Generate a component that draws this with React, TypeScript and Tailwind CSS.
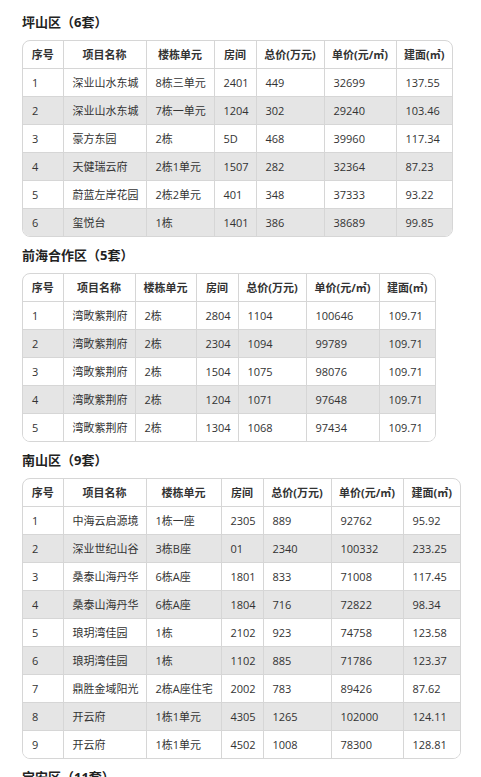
import React from "react";

type Row = [string, string, string, string, string, string, string];

interface Section {
  title: string;
  cols: string[];
  rows: Row[];
}

const HEADERS = ["序号", "项目名称", "楼栋单元", "房间", "总价(万元)", "单价(元/㎡)", "建面(㎡)"];

const SECTIONS: Section[] = [
  {
    title: "坪山区（6套）",
    cols: ["w-[40px]", "w-[83px]", "w-[68px]", "w-[42px]", "w-[68px]", "w-[72px]", "w-[56px]"],
    rows: [
      ["1", "深业山水东城", "8栋三单元", "2401", "449", "32699", "137.55"],
      ["2", "深业山水东城", "7栋一单元", "1204", "302", "29240", "103.46"],
      ["3", "豪方东园", "2栋", "5D", "468", "39960", "117.34"],
      ["4", "天健瑞云府", "2栋1单元", "1507", "282", "32364", "87.23"],
      ["5", "蔚蓝左岸花园", "2栋2单元", "401", "348", "37333", "93.22"],
      ["6", "玺悦台", "1栋", "1401", "386", "38689", "99.85"],
    ],
  },
  {
    title: "前海合作区（5套）",
    cols: ["w-[40px]", "w-[72px]", "w-[61px]", "w-[42px]", "w-[68px]", "w-[73px]", "w-[56px]"],
    rows: [
      ["1", "湾畋紫荆府", "2栋", "2804", "1104", "100646", "109.71"],
      ["2", "湾畋紫荆府", "2栋", "2304", "1094", "99789", "109.71"],
      ["3", "湾畋紫荆府", "2栋", "1504", "1075", "98076", "109.71"],
      ["4", "湾畋紫荆府", "2栋", "1204", "1071", "97648", "109.71"],
      ["5", "湾畋紫荆府", "2栋", "1304", "1068", "97434", "109.71"],
    ],
  },
  {
    title: "南山区（9套）",
    cols: ["w-[40px]", "w-[83px]", "w-[75px]", "w-[42px]", "w-[68px]", "w-[72px]", "w-[57px]"],
    rows: [
      ["1", "中海云启源境", "1栋一座", "2305", "889", "92762", "95.92"],
      ["2", "深业世纪山谷", "3栋B座", "01", "2340", "100332", "233.25"],
      ["3", "桑泰山海丹华", "6栋A座", "1801", "833", "71008", "117.45"],
      ["4", "桑泰山海丹华", "6栋A座", "1804", "716", "72822", "98.34"],
      ["5", "琅玥湾佳园", "1栋", "2102", "923", "74758", "123.58"],
      ["6", "琅玥湾佳园", "1栋", "1102", "885", "71786", "123.37"],
      ["7", "鼎胜金域阳光", "2栋A座住宅", "2002", "783", "89426", "87.62"],
      ["8", "开云府", "1栋1单元", "4305", "1265", "102000", "124.11"],
      ["9", "开云府", "1栋1单元", "4502", "1008", "78300", "128.81"],
    ],
  },
];

function Title({ children }: { children: React.ReactNode }) {
  return <h3 className="text-[13px] leading-[20px] font-bold text-[#222]">{children}</h3>;
}

function PriceTable({ section }: { section: Section }) {
  return (
    <div className="mt-[8px] w-fit rounded-[8px] border border-[#d6d6d6] overflow-hidden bg-white">
      <table className="table-fixed border-collapse border-hidden text-[11px] leading-[17px] text-[#333]">
        <colgroup>
          {section.cols.map((c, i) => (
            <col key={i} className={c} />
          ))}
        </colgroup>
        <thead>
          <tr>
            {HEADERS.map((h) => (
              <th
                key={h}
                className="border border-[#d6d6d6] py-[5px] px-[4px] font-bold text-center whitespace-nowrap"
              >
                {h}
              </th>
            ))}
          </tr>
        </thead>
        <tbody>
          {section.rows.map((r, i) => (
            <tr key={i} className={i % 2 === 1 ? "bg-[#e5e5e5]" : "bg-white"}>
              {r.map((v, j) => (
                <td
                  key={j}
                  className="border border-[#d6d6d6] py-[5px] pl-[9px] pr-[2px] text-left whitespace-nowrap"
                >
                  {v}
                </td>
              ))}
            </tr>
          ))}
        </tbody>
      </table>
    </div>
  );
}

export default function App() {
  return (
    <div
      className="min-h-screen bg-white pl-[22px] pt-[12px] overflow-hidden"
      style={{ fontFamily: '"Open Sans", "Noto Sans CJK SC", sans-serif' }}
    >
      {SECTIONS.map((s) => (
        <section key={s.title} className="mb-[8px]">
          <Title>{s.title}</Title>
          <PriceTable section={s} />
        </section>
      ))}
      <Title>宝安区（11套）</Title>
    </div>
  );
}
